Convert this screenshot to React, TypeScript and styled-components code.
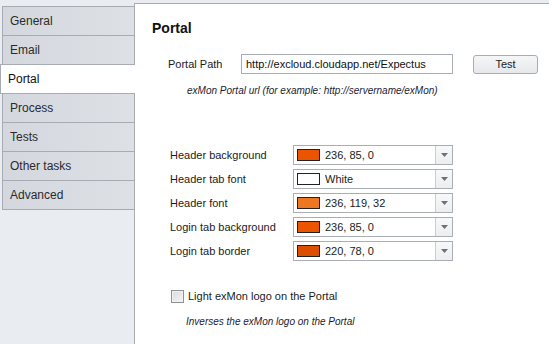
import React from "react";
import styled, { createGlobalStyle } from "styled-components";

const Global = createGlobalStyle`
  html, body { margin: 0; padding: 0; }
  body {
    background: #e9ecf1;
    font-family: "Liberation Sans", Arial, sans-serif;
    font-size: 11px;
    color: #1b1b1b;
    overflow: hidden;
  }
`;

const Root = styled.div`
  display: flex;
  width: 549px;
  height: 344px;
  overflow: hidden;
`;

const Sidebar = styled.div`
  width: 134px;
  flex: none;
  padding-top: 6px;
  display: flex;
  flex-direction: column;
  box-sizing: border-box;
`;

const Tab = styled.div<{ $active?: boolean; $first?: boolean }>`
  position: relative;
  box-sizing: border-box;
  height: ${(p) => (p.$first ? 30 : 29)}px;
  display: flex;
  align-items: center;
  font-size: 12px;
  color: #2a2a2a;
  border-bottom: 1px solid #a6abb4;
  border-top: ${(p) => (p.$first ? "1px solid #a6abb4" : "none")};
  border-left: 1px solid #a6abb4;
  ${(p) =>
    p.$active
      ? `
    background: #ffffff;
    margin-left: 0;
    margin-right: -1px;
    margin-top: -1px;
    height: 30px;
    border-top: 1px solid #a6abb4;
    padding-left: 7px;
    z-index: 2;
    color: #111;
  `
      : `
    background: linear-gradient(to right, #d4d8de, #dde0e5);
    margin-left: 2px;
    padding-left: 7px;
  `}
`;

const Panel = styled.div`
  flex: 1;
  margin-top: 3px;
  background: #ffffff;
  border-top: 1px solid #a6abb4;
  border-left: 1px solid #a6abb4;
  padding: 14px 0 0 17px;
  box-sizing: border-box;
  position: relative;
  z-index: 1;
`;

const Title = styled.div`
  font-weight: bold;
  font-size: 14px;
  color: #111;
  height: 20px;
  line-height: 20px;
`;

const PathRow = styled.div`
  display: flex;
  align-items: center;
  margin-top: 16px;
  padding-left: 16px;
  height: 20px;
`;

const PathLabel = styled.div`
  width: 73px;
  flex: none;
`;

const TextInput = styled.div`
  box-sizing: border-box;
  width: 212px;
  height: 20px;
  border: 1px solid #a9aeb5;
  padding-left: 4px;
  display: flex;
  align-items: center;
  font-size: 11px;
  color: #111;
  white-space: nowrap;
`;

const Button = styled.div`
  box-sizing: border-box;
  margin-left: 20px;
  width: 65px;
  height: 19px;
  border: 1px solid #a9acb1;
  border-radius: 3px;
  background: linear-gradient(to bottom, #f5f6f7, #e6e8eb);
  display: flex;
  align-items: center;
  justify-content: center;
  font-size: 11px;
`;

const Hint = styled.div<{ $indent: number; $top: number }>`
  font-style: italic;
  font-size: 10px;
  color: #1c1c30;
  padding-left: ${(p) => p.$indent}px;
  margin-top: ${(p) => p.$top}px;
  height: 14px;
  line-height: 14px;
  white-space: nowrap;
`;

const ColorList = styled.div`
  margin-top: 47px;
  padding-left: 18px;
  display: flex;
  flex-direction: column;
  gap: 4px;
`;

const ColorRow = styled.div`
  display: flex;
  align-items: center;
  height: 20px;
`;

const ColorLabel = styled.div`
  width: 123px;
  flex: none;
`;

const Combo = styled.div`
  box-sizing: border-box;
  width: 160px;
  height: 20px;
  border: 1px solid #a9aeb5;
  display: flex;
  align-items: center;
`;

const Swatch = styled.span<{ $c: string }>`
  box-sizing: border-box;
  width: 23px;
  height: 12px;
  margin-left: 3px;
  border: 1px solid #222;
  background: ${(p) => p.$c};
  flex: none;
`;

const ComboText = styled.span`
  margin-left: 5px;
  flex: 1;
`;

const DropBtn = styled.span`
  box-sizing: border-box;
  width: 17px;
  height: 18px;
  border-left: 1px solid #c9ccd1;
  background: linear-gradient(to bottom, #f7f8f9, #eceef0);
  display: flex;
  align-items: center;
  justify-content: center;
`;

const CheckRow = styled.div`
  display: flex;
  align-items: center;
  margin-top: 28px;
  padding-left: 19px;
  height: 14px;
`;

const Box = styled.span`
  box-sizing: border-box;
  width: 13px;
  height: 13px;
  border: 1px solid #8e9296;
  background: linear-gradient(135deg, #dcdcdc, #f4f4f4);
  box-shadow: inset 0 0 0 1px #f2f2f2;
  margin-right: 4px;
  flex: none;
`;

const Arrow = () => (
  <svg width="7" height="4" viewBox="0 0 7 4">
    <polygon points="0,0 7,0 3.5,4" fill="#6d7075" />
  </svg>
);

const colors = [
  { label: "Header background", c: "#ec5500", text: "236, 85, 0" },
  { label: "Header tab font", c: "#ffffff", text: "White" },
  { label: "Header font", c: "#ec7720", text: "236, 119, 32" },
  { label: "Login tab background", c: "#ec5500", text: "236, 85, 0" },
  { label: "Login tab border", c: "#dc4e00", text: "220, 78, 0" },
];

const tabs = ["General", "Email", "Portal", "Process", "Tests", "Other tasks", "Advanced"];

export default function App() {
  return (
    <Root>
      <Global />
      <Sidebar>
        {tabs.map((t, i) => (
          <Tab key={t} $first={i === 0} $active={t === "Portal"}>
            {t}
          </Tab>
        ))}
      </Sidebar>
      <Panel>
        <Title>Portal</Title>
        <PathRow>
          <PathLabel>Portal Path</PathLabel>
          <TextInput>http://excloud.cloudapp.net/Expectus</TextInput>
          <Button>Test</Button>
        </PathRow>
        <Hint $indent={35} $top={10}>
          exMon Portal url (for example: http://servername/exMon)
        </Hint>
        <ColorList>
          {colors.map((r) => (
            <ColorRow key={r.label}>
              <ColorLabel>{r.label}</ColorLabel>
              <Combo>
                <Swatch $c={r.c} />
                <ComboText>{r.text}</ComboText>
                <DropBtn>
                  <Arrow />
                </DropBtn>
              </Combo>
            </ColorRow>
          ))}
        </ColorList>
        <CheckRow>
          <Box />
          <span>Light exMon logo on the Portal</span>
        </CheckRow>
        <Hint $indent={34} $top={12}>
          Inverses the exMon logo on the Portal
        </Hint>
      </Panel>
    </Root>
  );
}
